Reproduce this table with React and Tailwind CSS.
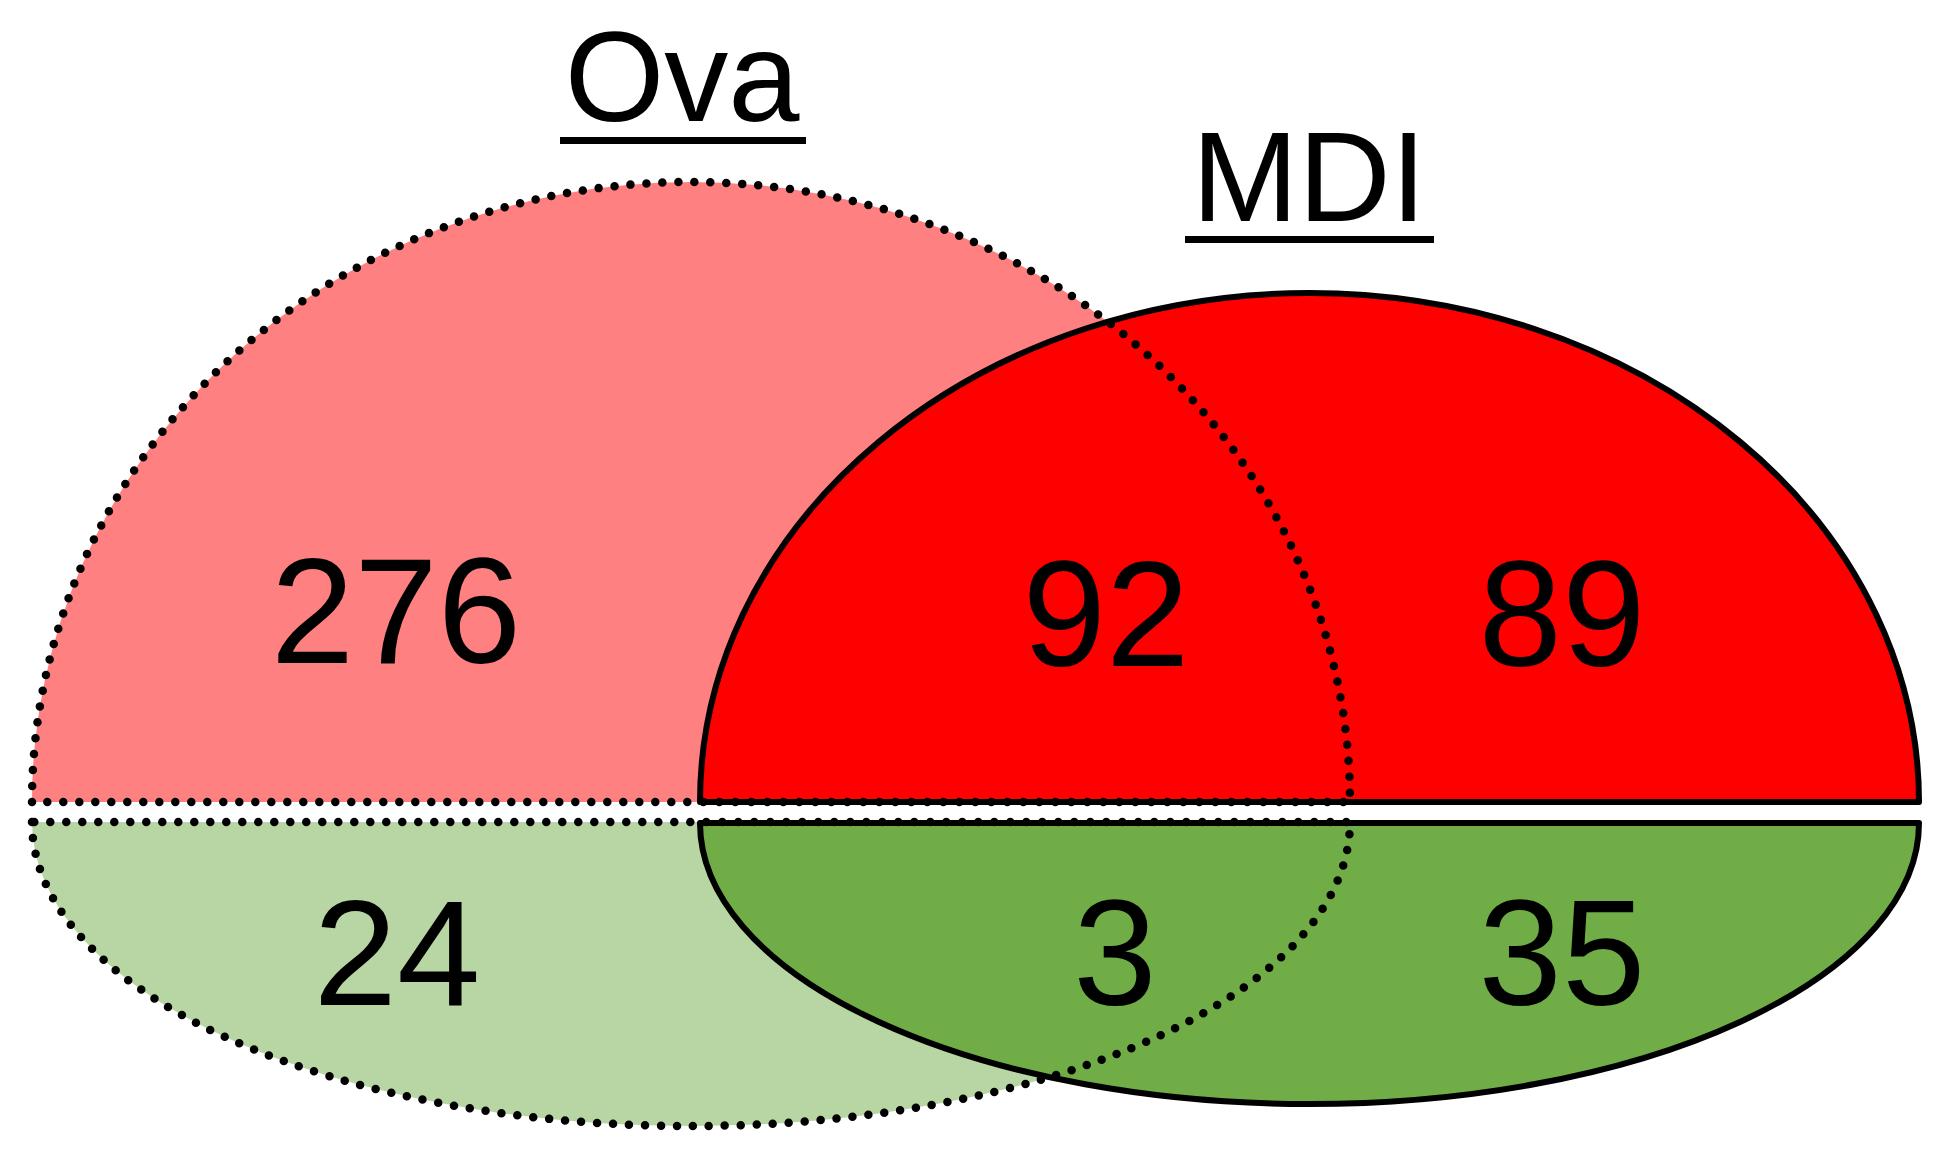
const ova = {
  top: "M 32 802 A 659 620 0 0 1 1350 802 Z",
  bottom: "M 32 822 A 659 304 0 0 0 1350 822 Z",
};

const mdi = {
  top: "M 700 802 A 609.5 509 0 0 1 1919 802 Z",
  bottom: "M 700 823 A 609.5 281 0 0 0 1919 823 Z",
};

const counts = [
  { x: 396, y: 663, v: "276" },
  { x: 1106, y: 666, v: "92" },
  { x: 1562, y: 666, v: "89" },
  { x: 397, y: 1005, v: "24" },
  { x: 1115, y: 1005, v: "3" },
  { x: 1562, y: 1005, v: "35" },
];

export default function App() {
  return (
    <div className="w-[1950px] h-[1154px] bg-white overflow-hidden font-['Liberation_Sans',Arial,sans-serif]">
      <svg
        width="1950"
        height="1154"
        viewBox="0 0 1950 1154"
        className="block"
      >
        {/* Set titles */}
        <text x="682" y="121" fontSize="128" textAnchor="middle" fill="#000">
          Ova
        </text>
        <rect x="560" y="137" width="246" height="7" fill="#000" />
        <text x="1309" y="221" fontSize="128" textAnchor="middle" fill="#000">
          MDI
        </text>
        <rect x="1185" y="236" width="249" height="7" fill="#000" />

        {/* Fills */}
        <path d={ova.top} fill="#ff8080" />
        <path d={ova.bottom} fill="#b8d6a3" />
        <path d={mdi.top} fill="#ff0000" />
        <path d={mdi.bottom} fill="#70ad47" />

        {/* MDI outline (solid) */}
        <path d={mdi.top} fill="none" stroke="#000" strokeWidth="6" strokeLinejoin="round" />
        <path d={mdi.bottom} fill="none" stroke="#000" strokeWidth="6" strokeLinejoin="round" />

        {/* Ova outline (dotted) */}
        <path
          d={ova.top}
          fill="none"
          stroke="#000"
          strokeWidth="8.5"
          strokeLinecap="round"
          strokeDasharray="0 16"
        />
        <path
          d={ova.bottom}
          fill="none"
          stroke="#000"
          strokeWidth="8.5"
          strokeLinecap="round"
          strokeDasharray="0 16"
        />

        {/* Counts */}
        {counts.map((c) => (
          <text
            key={c.v}
            x={c.x}
            y={c.y}
            fontSize="150"
            textAnchor="middle"
            fill="#000"
          >
            {c.v}
          </text>
        ))}
      </svg>
    </div>
  );
}
